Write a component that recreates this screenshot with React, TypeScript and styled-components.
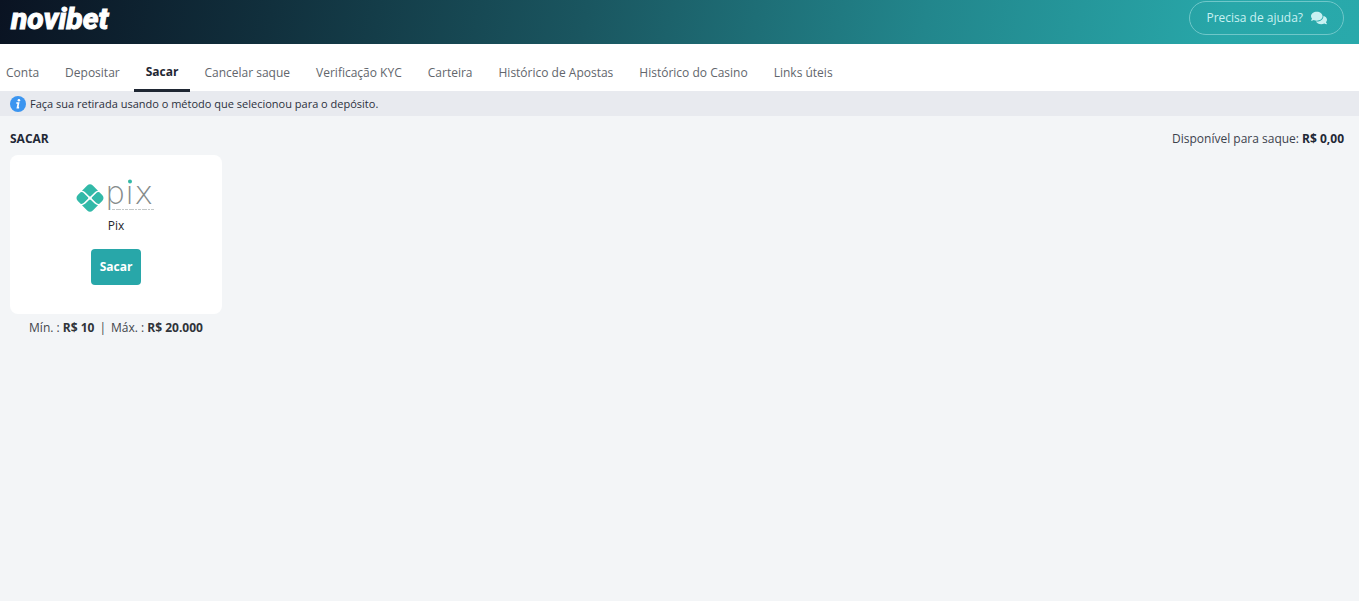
import React from "react";
import styled, { createGlobalStyle } from "styled-components";
import { FaComments } from "react-icons/fa";

const GlobalStyle = createGlobalStyle`
  *, *::before, *::after { box-sizing: border-box; }
  body {
    margin: 0;
    background: #f3f5f7;
    color: #1f2836;
    font-family: "Open Sans", "Noto Sans", sans-serif;
    font-size: 12px;
    line-height: 16px;
  }
`;

const Header = styled.header`
  display: flex;
  align-items: flex-start;
  justify-content: space-between;
  height: 44px;
  padding: 1px 15px 0 11px;
  background: linear-gradient(100deg, #0a1322 0%, #11303d 20%, #1a5660 43%, #22868c 68%, #28a7a9 90%, #29a9ab 100%);
`;

const Brand = styled.a`
  color: #fff;
  font-family: Roboto, "Liberation Sans", sans-serif;
  font-size: 30px;
  font-style: italic;
  font-weight: 800;
  line-height: 36px;
  text-decoration: none;
  -webkit-text-stroke: 1px #fff;
`;

const HelpButton = styled.button`
  display: flex;
  align-items: center;
  gap: 8px;
  height: 34px;
  padding: 0 16px;
  border: 1px solid #6fc7c9;
  border-radius: 17px;
  background: transparent;
  color: #c9f1f2;
  font: inherit;
  cursor: pointer;
`;

const NavBar = styled.div`
  background: #fff;
`;

const Nav = styled.nav`
  display: flex;
  gap: 2px;
  height: 48px;
  padding-top: 12px;
  margin: 0 0 -1px -6px;
  position: relative;
`;

const Tab = styled.a<{ $active?: boolean }>`
  display: flex;
  align-items: center;
  padding: ${(p) => (p.$active ? "0 12px 1px" : "0 12px")};
  border-bottom: 3px solid ${(p) => (p.$active ? "#1f2733" : "transparent")};
  color: ${(p) => (p.$active ? "#1f2733" : "#62666c")};
  font-weight: ${(p) => (p.$active ? 700 : 400)};
  text-decoration: none;
  white-space: nowrap;
`;

const Notice = styled.p`
  display: flex;
  align-items: center;
  gap: 4px;
  margin: 0;
  height: 25px;
  padding: 0 10px;
  background: #e8eaef;
  color: #2b303c;
  font-size: 11px;
`;

const Main = styled.main`
  padding: 15px 15px 24px 10px;
`;

const TitleRow = styled.div`
  display: flex;
  align-items: center;
  justify-content: space-between;
  margin-bottom: 8px;
`;

const Title = styled.h1`
  margin: 0;
  font-size: 12px;
  line-height: 16px;
`;

const Balance = styled.p`
  margin: 0;
  color: #3c424d;

  strong { color: #1f2836; }
`;

const Methods = styled.section`
  display: grid;
  grid-template-columns: repeat(auto-fill, 212px);
  gap: 12px;
`;

const Method = styled.article`
  text-align: center;
`;

const Card = styled.div`
  display: flex;
  flex-direction: column;
  align-items: center;
  padding: 24px 16px 29px;
  border-radius: 8px;
  background: #fff;
`;

const PixArt = styled.svg`
  overflow: visible;
`;

const MethodName = styled.h2`
  margin: 3px 0 15px;
  font-size: 12px;
  font-weight: 400;
  line-height: 16px;
  color: #22262c;
`;

const WithdrawButton = styled.button`
  height: 36px;
  padding: 0 9px;
  border: 0;
  border-radius: 4px;
  background: #28a7a9;
  color: #fff;
  font: inherit;
  font-weight: 700;
  cursor: pointer;
`;

const Limits = styled.p`
  display: flex;
  justify-content: center;
  gap: 5px;
  margin: 6px 0 0;
  color: #42464c;

  strong { color: #30343a; }
`;

const InfoIcon = () => (
  <svg width="16" height="16" viewBox="0 0 16 16" aria-hidden="true">
    <circle cx="8" cy="8" r="8" fill="#3b95f0" />
    <circle cx="8.900" cy="4.200" r="1.300" fill="#fff" />
    <path d="M6.300 7h2.200l-1 4.700h1.600" fill="none" stroke="#fff" strokeWidth="1.700" />
  </svg>
);

const PixLogo = () => (
  <PixArt width="80" height="36" viewBox="0 0 80 36" role="img" aria-label="Pix">
    <g fill="#32b9a8" transform="translate(0 -1)">
      <path d="M6 12.800 11.200 7.600Q14 5 16.800 7.600L22 12.800Q20 13 18.600 14.400L15 18Q14 19 13 18L9.400 14.400Q8 13 6 12.800Z" />
      <path d="M6 27.200 11.200 32.400Q14 35 16.800 32.400L22 27.200Q20 27 18.600 25.600L15 22Q14 21 13 22L9.400 25.600Q8 27 6 27.200Z" />
      <path d="M4.600 14.200Q6.600 13.800 8.200 15.400L12 19.200Q12.800 20 12 20.800L8.200 24.600Q6.600 26.200 4.600 25.800L1.800 23Q-.800 20 1.800 17Z" />
      <path d="M23.400 14.200Q21.400 13.800 19.800 15.400L16 19.200Q15.200 20 16 20.800L19.800 24.600Q21.400 26.200 23.400 25.800L26.200 23Q28.800 20 26.200 17Z" />
    </g>
    <text x="29" y="25" fill="#858b8b" fontFamily="'DejaVu Sans', 'DejaVu Sans Light', sans-serif" fontWeight="200" fontSize="32">
      pix
    </text>
    <circle cx="54" cy="2.500" r="2" fill="#32b9a8" />
    <path d="M36 30.500H79" stroke="#c4c8c8" strokeWidth="1" strokeDasharray="3 1 5 1 2 1" />
  </PixArt>
);

const tabs = [
  "Conta",
  "Depositar",
  "Sacar",
  "Cancelar saque",
  "Verificação KYC",
  "Carteira",
  "Histórico de Apostas",
  "Histórico do Casino",
  "Links úteis",
];

export default function App() {
  return (
    <>
      <GlobalStyle />
      <Header>
        <Brand href="#">novibet</Brand>
        <HelpButton type="button">
          Precisa de ajuda? <FaComments size={16} aria-hidden />
        </HelpButton>
      </Header>
      <NavBar>
        <Nav>
          {tabs.map((tab) => (
            <Tab key={tab} href="#" $active={tab === "Sacar"} aria-current={tab === "Sacar" ? "page" : undefined}>
              {tab}
            </Tab>
          ))}
        </Nav>
      </NavBar>
      <Notice>
        <InfoIcon />
        Faça sua retirada usando o método que selecionou para o depósito.
      </Notice>
      <Main>
        <TitleRow>
          <Title>SACAR</Title>
          <Balance>
            Disponível para saque: <strong>R$ 0,00</strong>
          </Balance>
        </TitleRow>
        <Methods>
          <Method>
            <Card>
              <PixLogo />
              <MethodName>Pix</MethodName>
              <WithdrawButton type="button">Sacar</WithdrawButton>
            </Card>
            <Limits>
              <span>
                Mín. : <strong>R$ 10</strong>
              </span>
              <span>|</span>
              <span>
                Máx. : <strong>R$ 20.000</strong>
              </span>
            </Limits>
          </Method>
        </Methods>
      </Main>
    </>
  );
}
